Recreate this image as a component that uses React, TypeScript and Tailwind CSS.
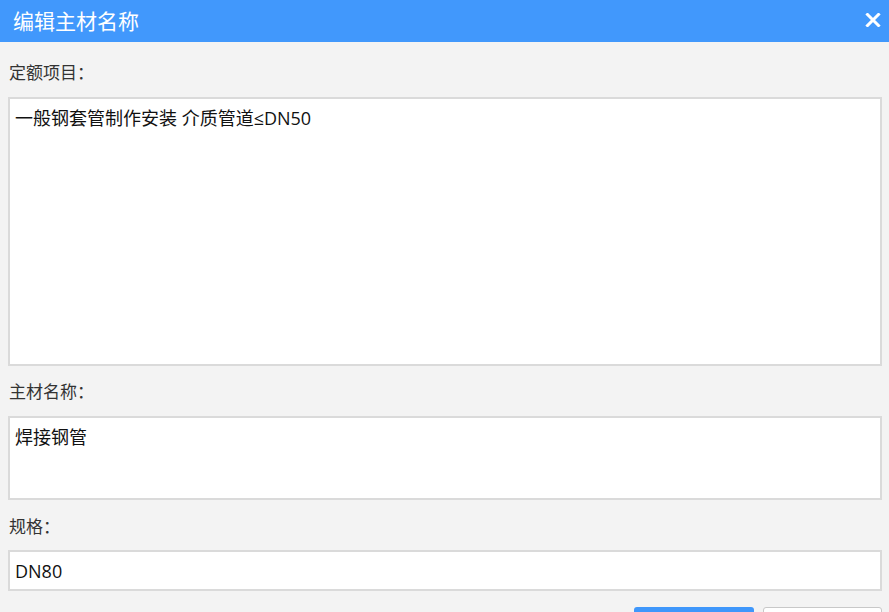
import React from "react";

const font = { fontFamily: '"Open Sans", "Noto Sans CJK SC", "Microsoft YaHei", sans-serif' };

const Field: React.FC<{ label: string; value: React.ReactNode; boxClass: string; labelClass: string }> = ({
  label,
  value,
  boxClass,
  labelClass,
}) => (
  <>
    <div className={`text-[17px] leading-[22px] text-[#333] ${labelClass}`}>{label}</div>
    <div className={`bg-white border-2 border-[#dadada] px-[5px] text-[18px] leading-[24px] text-[#111] ${boxClass}`}>
      {value}
    </div>
  </>
);

const App: React.FC = () => {
  return (
    <div className="w-[889px] h-[612px] overflow-hidden bg-[#f3f3f3]" style={font}>
      <div className="h-[42px] bg-[#4198fc] flex items-center justify-between pl-[13px] pr-[8px]">
        <span className="text-white text-[21px] leading-[26px]">编辑主材名称</span>
        <svg width="16" height="14" viewBox="0 0 16 14" className="mt-[-2px]">
          <path d="M2.5 1.5 L13.5 12.5 M13.5 1.5 L2.5 12.5" stroke="white" strokeWidth="3" strokeLinecap="square" />
        </svg>
      </div>
      <div className="pl-[8px] pr-[7px] pt-[20px]">
        <Field
          label="定额项目："
          value="一般钢套管制作安装 介质管道≤DN50"
          labelClass="pl-[1px]"
          boxClass="mt-[13px] h-[269px] pt-[7px]"
        />
        <Field label="主材名称：" value="焊接钢管" labelClass="mt-[15px] pl-[1px]" boxClass="mt-[13px] h-[84px] pt-[7px]" />
        <Field label="规格：" value="DN80" labelClass="mt-[16px] pl-[1px]" boxClass="mt-[12px] h-[41px] pt-[7px] px-[4px]" />
        <div className="mt-[16px] flex justify-end gap-[9px]">
          <div className="w-[120px] h-[32px] rounded-[3px] bg-[#3f97fb]" />
          <div className="w-[119px] h-[32px] rounded-[3px] bg-white border border-[#c8c8c8]" />
        </div>
      </div>
    </div>
  );
};

export default App;
